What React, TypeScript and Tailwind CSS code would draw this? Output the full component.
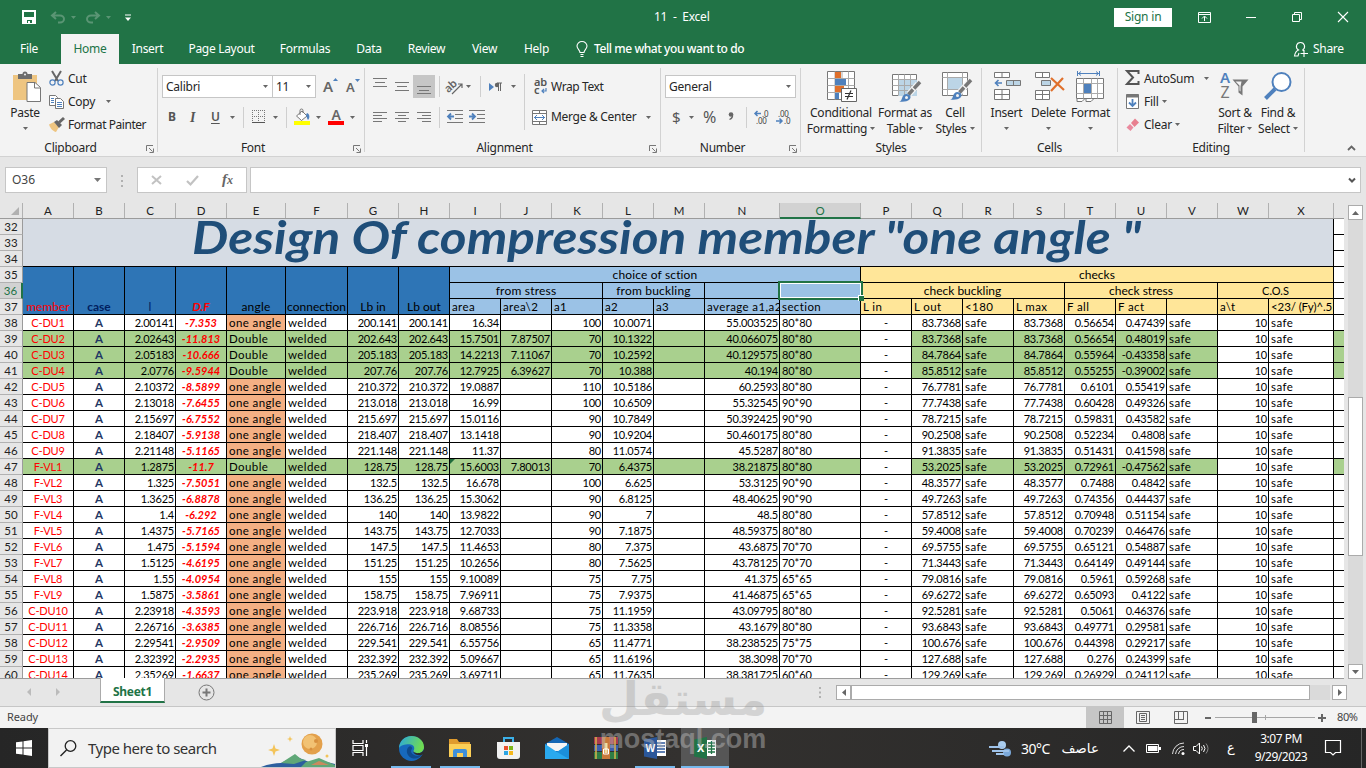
import type { ReactNode } from 'react';
import clsx from 'clsx';

const COLUMNS = 'ABCDEFGHIJKLMNOPQRSTUVWX'.split('');

const GRID_COLS =
  'grid-cols-[51px_51px_51px_51px_59px_62px_51px_51px_51px_51px_51px_51px_51px_75px_81px_51px_51px_51px_51px_51px_51px_51px_51px_65px_10px]';

// member | l | D.F | Lb | area | area\2 | a1 | a2 | average | section | L out | F all | F act
const MEMBERS = `C-DU1|2.00141|-7.353|200.141|16.34||100|10.0071|55.003525|80*80|83.7368|0.56654|0.47439
C-DU2|2.02643|-11.813|202.643|15.7501|7.87507|70|10.1322|40.066075|80*80|83.7368|0.56654|0.48019
C-DU3|2.05183|-10.666|205.183|14.2213|7.11067|70|10.2592|40.129575|80*80|84.7864|0.55964|-0.43358
C-DU4|2.0776|-9.5944|207.76|12.7925|6.39627|70|10.388|40.194|80*80|85.8512|0.55255|-0.39002
C-DU5|2.10372|-8.5899|210.372|19.0887||110|10.5186|60.2593|80*80|76.7781|0.6101|0.55419
C-DU6|2.13018|-7.6455|213.018|16.99||100|10.6509|55.32545|90*90|77.7438|0.60428|0.49326
C-DU7|2.15697|-6.7552|215.697|15.0116||90|10.7849|50.392425|90*90|78.7215|0.59831|0.43582
C-DU8|2.18407|-5.9138|218.407|13.1418||90|10.9204|50.460175|80*80|90.2508|0.52234|0.4808
C-DU9|2.21148|-5.1165|221.148|11.37||80|11.0574|45.5287|80*80|91.3835|0.51431|0.41598
F-VL1|1.2875|-11.7|128.75|15.6003|7.80013|70|6.4375|38.21875|80*80|53.2025|0.72961|-0.47562
F-VL2|1.325|-7.5051|132.5|16.678||100|6.625|53.3125|90*90|48.3577|0.7488|0.4842
F-VL3|1.3625|-6.8878|136.25|15.3062||90|6.8125|48.40625|90*90|49.7263|0.74356|0.44437
F-VL4|1.4|-6.292|140|13.9822||90|7|48.5|80*80|57.8512|0.70948|0.51154
F-VL5|1.4375|-5.7165|143.75|12.7033||90|7.1875|48.59375|80*80|59.4008|0.70239|0.46476
F-VL6|1.475|-5.1594|147.5|11.4653||80|7.375|43.6875|70*70|69.5755|0.65121|0.54887
F-VL7|1.5125|-4.6195|151.25|10.2656||80|7.5625|43.78125|70*70|71.3443|0.64149|0.49144
F-VL8|1.55|-4.0954|155|9.10089||75|7.75|41.375|65*65|79.0816|0.5961|0.59268
F-VL9|1.5875|-3.5861|158.75|7.96911||75|7.9375|41.46875|65*65|69.6272|0.65093|0.4122
C-DU10|2.23918|-4.3593|223.918|9.68733||75|11.1959|43.09795|80*80|92.5281|0.5061|0.46376
C-DU11|2.26716|-3.6385|226.716|8.08556||75|11.3358|43.1679|80*80|93.6843|0.49771|0.29581
C-DU12|2.29541|-2.9509|229.541|6.55756||65|11.4771|38.238525|75*75|100.676|0.44398|0.29217
C-DU13|2.32392|-2.2935|232.392|5.09667||65|11.6196|38.3098|70*70|127.688|0.276|0.24399
C-DU14|2.35269|-1.6637|235.269|3.69711||65|11.7635|38.381725|60*60|129.269|0.26929|0.24112`
  .split('\n')
  .map((line) => line.split('|'));

interface IcoProps {
  w: number;
  h: number;
  className?: string;
  children: ReactNode;
}

function Ico({ w, h, className, children }: IcoProps) {
  return (
    <svg width={w} height={h} viewBox={`0 0 ${w} ${h}`} fill="none" className={clsx('shrink-0 overflow-visible', className)}>
      {children}
    </svg>
  );
}

function Arrow({ className = '' }: { className?: string }) {
  return (
    <Ico w={5} h={3} className={className}>
      <path d="M0 0h5L2.5 3z" fill="#666" />
    </Ico>
  );
}

function Sep({ className = '' }: { className?: string }) {
  return <div className={clsx('w-px shrink-0 bg-[#cfcfcf]', className)} />;
}

function TitleBar() {
  return (
    <div className="flex h-[34px] items-center text-white">
      <Ico w={14} h={14} className="ml-[22px]">
        <path d="M1 1h12v12H1z" stroke="#fff" strokeWidth="2" />
        <path d="M2 7h10v6H2z" fill="#fff" />
        <path d="M5 10h5v3H5z" fill="#217346" />
        <path d="M6 11h2v2H6z" fill="#fff" />
      </Ico>
      <Ico w={14} h={12} className="ml-[15px]">
        <path d="M5 1L1 4.500L5 8M1.500 4.500H9a4 3.500 0 0 1 0 7H7" stroke="#5a9574" strokeWidth="2" />
      </Ico>
      <Ico w={5} h={3} className="ml-[6px]">
        <path d="M0 0h5L2.500 3z" fill="#5a9574" />
      </Ico>
      <Ico w={14} h={12} className="ml-[10px]">
        <path d="M9 1l4 3.500L9 8M12.500 4.500H5a4 3.500 0 0 0 0 7h2" stroke="#5a9574" strokeWidth="2" />
      </Ico>
      <Ico w={5} h={3} className="ml-[6px]">
        <path d="M0 0h5L2.500 3z" fill="#5a9574" />
      </Ico>
      <Ico w={6} h={7} className="ml-[14px]">
        <path d="M0 1h6" stroke="#fff" />
        <path d="M0 3.500h6L3 7z" fill="#fff" />
      </Ico>
      <div className="ml-[523px] w-[60px] whitespace-pre text-[12px] tracking-[-0.25px]">11  -  Excel</div>
      <div className="ml-[400px] flex h-[19px] w-[58px] items-center justify-center bg-white text-[12px] tracking-[-0.2px] text-[#217346]">
        Sign in
      </div>
      <Ico w={13} h={11} className="ml-[26px]">
        <path d="M.5.5h12v10H.5zM.5 2.500h12M6.500 9V4.500M4 6.500L6.500 4L9 6.500" stroke="#fff" />
      </Ico>
      <Ico w={10} h={11} className="ml-[35px]">
        <path d="M0 5.500h10" stroke="#fff" />
      </Ico>
      <Ico w={10} h={10} className="ml-[36px]">
        <path d="M.5 2.500h7v7h-7zM2.500 2.500v-2h7v7h-2" stroke="#fff" />
      </Ico>
      <Ico w={10} h={10} className="ml-[36px]">
        <path d="M0 0l10 10M10 0L0 10" stroke="#fff" strokeWidth="1.1" />
      </Ico>
    </div>
  );
}

const TABS = [
  { name: 'File', width: 'w-[58px]' },
  { name: 'Home', width: 'w-[58px] ml-[3px]' },
  { name: 'Insert', width: 'w-[57px]' },
  { name: 'Page Layout', width: 'w-[91px]' },
  { name: 'Formulas', width: 'w-[76px]' },
  { name: 'Data', width: 'w-[52px]' },
  { name: 'Review', width: 'w-[63px]' },
  { name: 'View', width: 'w-[53px]' },
  { name: 'Help', width: 'w-[51px]' },
];

function TabStrip() {
  return (
    <div className="flex h-[30px] items-center text-[12px] tracking-[-0.3px] text-white">
      {TABS.map((tab) => (
        <div
          key={tab.name}
          className={clsx(
            'flex h-full shrink-0 items-center justify-center whitespace-nowrap',
            tab.width,
            tab.name === 'Home' && 'bg-[#f3f3f3] text-[#217346]',
          )}
        >
          {tab.name}
        </div>
      ))}
      <Ico w={12} h={16} className="ml-[14px]">
        <path d="M4 11.500C4 9 1 8 1 5a5 4.500 0 0 1 10 0c0 3-3 4-3 6.500zM4.500 13.500h3M4.500 15.500h3" stroke="#fff" strokeWidth="1.1" />
      </Ico>
      <div className="ml-[6px] w-[170px] whitespace-nowrap font-medium tracking-[-0.42px]">Tell me what you want to do</div>
      <Ico w={14} h={15} className="ml-[530px]">
        <path d="M6.500.5a4 4 0 0 1 2 7.500M6.500.5a4 4 0 0 0-2 7.500c-2.500 1-3.500 3-4 6h3.500l1-3M8.500 8l1.500 1M10 8v7M6.500 11.500H14" stroke="#fff" strokeWidth="1.1" />
      </Ico>
      <div className="ml-[5px]">Share</div>
    </div>
  );
}

interface GroupProps {
  label: string;
  className: string;
  launcher?: boolean;
  labelShift?: string;
  children: ReactNode;
}

function Group({ label, className, launcher, labelShift, children }: GroupProps) {
  return (
    <div className={clsx('mt-1 flex h-[84px] shrink-0 flex-col border-r border-[#d2d2d2]', className)}>
      <div className="flex h-[70px] shrink-0">{children}</div>
      <div className="relative flex h-[14px] shrink-0 items-center justify-center pt-[6px] text-[#262626]">
        <span className={labelShift}>{label}</span>
        {launcher && (
          <Ico w={8} h={8} className="absolute right-[3px] top-[7px]">
            <path d="M.5 6V.5H7M3 3l3.500 3.500M7.500 3.500v4h-4" stroke="#777" />
          </Ico>
        )}
      </div>
    </div>
  );
}

function ClipboardGroup() {
  return (
    <Group label="Clipboard" launcher labelShift="-ml-4" className="w-[158px]">
      <div className="ml-[5px] flex w-[40px] flex-col items-center">
        <Ico w={29} h={31} className="ml-[3px] mt-[3px]">
          <path d="M1 4h24v25H1z" fill="#eec581" />
          <path d="M6 3h4.500a2.500 2.500 0 0 1 5 0H20v5H6z" fill="#6d6d6d" />
          <circle cx="13" cy="3.500" r="1" fill="#f3f3f3" />
          <path d="M15 11.500h8l5.500 5V30.500H15z" fill="#fff" stroke="#777" />
          <path d="M22.500 12v5h5.500" stroke="#777" />
        </Ico>
        <div className="mt-[2px]">Paste</div>
        <Arrow className="mt-[5px]" />
      </div>
      <div className="-mt-px ml-[4px] flex flex-col">
        <div className="flex h-[23px] items-center">
          <Ico w={15} h={15}>
            <path d="M3 0l6 10M12 0L6 10" stroke="#666" strokeWidth="2" />
            <circle cx="3.500" cy="11.500" r="2.600" stroke="#4f81bd" strokeWidth="1.200" />
            <circle cx="11.500" cy="11.500" r="2.600" stroke="#4f81bd" strokeWidth="1.200" />
          </Ico>
          <span className="ml-[4px]">Cut</span>
        </div>
        <div className="flex h-[23px] items-center">
          <Ico w={15} h={14}>
            <path d="M.5.5h6l2 2v8h-8z" fill="#fff" stroke="#777" />
            <path d="M2 3.500h3M2 5.500h3M2 7.500h3" stroke="#4f81bd" />
            <path d="M6.500 3.500h5l3 3v7h-8z" fill="#fff" stroke="#777" />
            <path d="M8 7.500h5M8 9.500h5M8 11.500h5" stroke="#4f81bd" />
          </Ico>
          <span className="ml-[4px]">Copy</span>
          <Arrow className="ml-[11px]" />
        </div>
        <div className="flex h-[23px] items-center">
          <Ico w={16} h={14}>
            <path d="M0 6.500l5-2.500 5 5-3 5C4 13.500 1 10 0 6.500z" fill="#eec581" />
            <path d="M5 4l3-2 5 5-3 3z" fill="#666" />
            <path d="M10 4.500L15 0" stroke="#666" strokeWidth="3" />
          </Ico>
          <span className="ml-[3px] whitespace-nowrap tracking-[-0.45px]">Format Painter</span>
        </div>
      </div>
    </Group>
  );
}

function Combo({ value, className }: { value: string; className: string }) {
  return (
    <div className={clsx('flex h-[23px] shrink-0 items-center justify-between border border-[#c6c6c6] bg-white pl-[3px] pr-[4px]', className)}>
      <span>{value}</span>
      <Arrow />
    </div>
  );
}

function FontGroup() {
  return (
    <Group label="Font" launcher labelShift="-ml-4" className="w-[207px]">
      <div className="flex flex-col">
        <div className="mt-[7px] flex h-[23px] items-center">
          <Combo value="Calibri" className="ml-[4px] w-[111px]" />
          <Combo value="11" className="-ml-px w-[44px]" />
          <div className="ml-[7px] flex w-[16px] text-[15px] font-semibold leading-none text-[#666]">
            A
            <Ico w={5} h={3} className="-mt-px">
              <path d="M0 3h5L2.500 0z" fill="#4f81bd" />
            </Ico>
          </div>
          <div className="ml-[7px] flex w-[16px] text-[13px] font-semibold leading-none text-[#666]">
            <span className="mt-[1px]">A</span>
            <Ico w={5} h={3} className="-mt-px">
              <path d="M0 0h5L2.500 3z" fill="#4f81bd" />
            </Ico>
          </div>
        </div>
        <div className="mt-[7px] flex h-6 items-center text-[13px] text-[#555]">
          <span className="ml-[10px] w-[22px] text-[12px] font-bold">B</span>
          <span className="w-[21px] text-[14px] font-bold italic [font-family:'Liberation_Serif']">I</span>
          <span className="w-[19px] text-[12px] font-semibold underline underline-offset-2">U</span>
          <Arrow />
          <Sep className="ml-[8px] h-[21px]" />
          <Ico w={14} h={14} className="ml-[8px]">
            <path d="M.5 0v12M6.500 0v12M12.500 0v12M0 .5h13M0 6.500h13" stroke="#777" strokeDasharray="1 1" />
            <path d="M0 12.500h13" stroke="#555" />
          </Ico>
          <Arrow className="ml-[7px]" />
          <Sep className="ml-[8px] h-[21px]" />
          <Ico w={16} h={16} className="ml-[7px]">
            <path d="M2.500 7L8 2l5 5-5.500 4.500z" fill="#fff" stroke="#777" />
            <path d="M6 6V1.500a1.500 1.500 0 0 1 3 0V4" stroke="#777" />
            <path d="M13 4c3 1 3 5 1 7-1-1-1-3-2-5z" fill="#4f81bd" />
            <path d="M0 12h16v4H0z" fill="#ff0" />
          </Ico>
          <Arrow className="ml-[6px]" />
          <div className="ml-[7px] flex h-[16px] w-[16px] flex-col items-center border-b-4 border-[#f00] text-[14px] font-semibold leading-[11px] text-[#666]">
            A
          </div>
          <Arrow className="ml-[6px]" />
        </div>
      </div>
    </Group>
  );
}

function LinesIcon({ d, className }: { d: string; className?: string }) {
  return (
    <Ico w={14} h={14} className={className}>
      <path d={d} stroke="#777" />
    </Ico>
  );
}

function AlignmentGroup() {
  return (
    <Group label="Alignment" launcher labelShift="-ml-4" className="w-[296px]">
      <div className="flex w-[159px] flex-col">
        <div className="mt-[7px] flex h-[23px] items-center">
          <LinesIcon className="-mt-[3px] ml-[8px]" d="M0 0.500h14M2 4.500h10M0 8.500h14" />
          <LinesIcon className="ml-[8px]" d="M0 2.500h14M2 6.500h10M0 10.500h14" />
          <div className="ml-[4px] flex h-[23px] w-[22px] items-center justify-center bg-[#c6c6c6]">
            <LinesIcon d="M0 6.500h14M2 10.500h10M0 13.500h14" />
          </div>
          <Sep className="ml-[4px] h-[21px]" />
          <Ico w={18} h={16} className="ml-[6px]">
            <text x="-1" y="10" fontSize="11" fontWeight="600" fill="#666" transform="rotate(-42 6 8)">
              ab
            </text>
            <path d="M6 15L16 5M12 5h4v4" stroke="#666" strokeWidth="1.200" />
          </Ico>
          <Arrow className="ml-[2px]" />
          <Sep className="ml-[9px] h-[21px]" />
          <Ico w={14} h={10} className="ml-[8px]">
            <path d="M0 1l5 4-5 4z" fill="#4f81bd" />
            <path d="M9.500 9V1M11.500 9V1M8 1h5" stroke="#666" />
            <circle cx="8" cy="3" r="2.200" fill="#666" />
          </Ico>
          <Arrow className="ml-[8px]" />
        </div>
        <div className="mt-[7px] flex h-6 items-center">
          <LinesIcon className="ml-[8px]" d="M0 2.500h14M0 5.500h9M0 8.500h14M0 11.500h9" />
          <LinesIcon className="ml-[8px]" d="M0 2.500h14M3 5.500h8M0 8.500h14M3 11.500h8" />
          <LinesIcon className="ml-[8px]" d="M0 2.500h14M5 5.500h9M0 8.500h14M5 11.500h9" />
          <Sep className="ml-[8px] h-[21px]" />
          <Ico w={16} h={14} className="ml-[7px]">
            <path d="M0 .5h16M8 4.500h8M8 8.500h8M0 12.500h16" stroke="#777" />
            <path d="M7 6.500H1M4 3.500L1 6.500l3 3" stroke="#4f81bd" strokeWidth="1.800" />
          </Ico>
          <Ico w={16} h={14} className="ml-[6px]">
            <path d="M0 .5h16M8 4.500h8M8 8.500h8M0 12.500h16" stroke="#777" />
            <path d="M0 6.500h6M3 3.500l3 3-3 3" stroke="#4f81bd" strokeWidth="1.800" />
          </Ico>
        </div>
      </div>
      <Sep className="mt-[6px] h-[56px]" />
      <div className="flex flex-col">
        <div className="mt-[7px] flex h-[23px] items-center">
          <Ico w={14} h={16} className="ml-[9px]">
            <text x="0" y="7" fontSize="11" fontWeight="600" fill="#555">
              ab
            </text>
            <text x="0" y="15" fontSize="11" fontWeight="600" fill="#555">
              c
            </text>
            <path d="M12 9v3H8M10 10l-2 2 2 2" stroke="#4f81bd" strokeWidth="1.200" />
          </Ico>
          <span className="ml-[3px] tracking-[-0.4px]">Wrap Text</span>
        </div>
        <div className="mt-[7px] flex h-6 items-center">
          <Ico w={15} h={15} className="ml-[7px]">
            <path d="M.5.5h14v14H.5zM.5 3.500h14M.5 11.500h14M7.500 0v3M7.500 12v3" fill="#fff" stroke="#777" />
            <path d="M2 7.500h11M5 5L2.500 7.500L5 10M10 5l2.500 2.500L10 10" stroke="#4f81bd" />
          </Ico>
          <span className="ml-[4px] w-[92px] whitespace-nowrap tracking-[-0.3px]">Merge &amp; Center</span>
          <Arrow className="ml-[3px]" />
        </div>
      </div>
    </Group>
  );
}

function NumberGroup() {
  return (
    <Group label="Number" launcher labelShift="-ml-4" className="w-[140px]">
      <div className="flex flex-col">
        <div className="mt-[7px] flex h-[23px] items-center">
          <Combo value="General" className="ml-[4px] w-[131px]" />
        </div>
        <div className="mt-[7px] flex h-6 items-center text-[15px] text-[#555]">
          <span className="ml-[11px] w-[17px]">$</span>
          <Arrow />
          <span className="ml-[9px] w-[24px] text-[16px]">%</span>
          <Ico w={6} h={8} className="-mt-[2px] ml-[1px]">
            <circle cx="3" cy="2.500" r="2.300" fill="#666" />
            <path d="M4.500 2.500Q5 6 1.500 7.500" stroke="#666" strokeWidth="1.300" />
          </Ico>
          <Sep className="ml-[12px] h-[21px]" />
          <Ico w={15} h={15} className="ml-[7px]">
            <text x="8" y="6.500" fontSize="8" fill="#444">.0</text>
            <text x="2" y="14" fontSize="8" fill="#444">.00</text>
            <path d="M7 3.500H1M3.500 1L1 3.500L3.500 6" stroke="#4f81bd" strokeWidth="1.500" />
          </Ico>
          <Ico w={15} h={15} className="ml-[7px]">
            <text x="2" y="6.500" fontSize="8" fill="#444">.00</text>
            <text x="8" y="14" fontSize="8" fill="#444">.0</text>
            <path d="M0 11h6M3.500 8.500L6 11l-2.500 2.500" stroke="#4f81bd" strokeWidth="1.500" />
          </Ico>
        </div>
      </div>
    </Group>
  );
}

interface BigButtonProps {
  icon: ReactNode;
  line1: string;
  line2?: string;
  className: string;
}

function BigButton({ icon, line1, line2, className }: BigButtonProps) {
  return (
    <div className={clsx('flex shrink-0 flex-col items-center whitespace-nowrap', className)}>
      <div className="flex h-[37px] items-center">{icon}</div>
      <div className="h-[16px] leading-[16px]">{line1}</div>
      <div className="flex h-[16px] items-center leading-[16px]">
        {line2 && <span className="mr-[3px]">{line2}</span>}
        <Arrow className="-mt-px" />
      </div>
    </div>
  );
}

function Brush({ x, y }: { x: number; y: number }) {
  return (
    <g transform={`translate(${x} ${y})`}>
      <path d="M9 11L18 1" stroke="#f3f3f3" strokeWidth="6" />
      <path d="M8.500 11.500L13 6.500" stroke="#777" strokeWidth="3.500" />
      <path d="M14 5.500L20 -1" stroke="#777" strokeWidth="3.500" />
      <path d="M-1 18.500c4 0 2-7 7-7.500 4 0 6 3 3.500 5.500-2 2-6 2.500-10.500 2z" fill="#4f81bd" />
      <circle cx="6.500" cy="14.500" r="1.500" fill="#f3f3f3" />
    </g>
  );
}

function StylesGroup() {
  return (
    <Group label="Styles" className="w-[181px]">
      <BigButton
        className="ml-[4px] w-[72px]"
        line1="Conditional"
        line2="Formatting"
        icon={
          <Ico w={30} h={31} className="ml-[2px]">
            <path d="M.5.5h27v28H.5z" fill="#fff" stroke="#777" />
            <path d="M.5 7.500h27M.5 14.500h27M.5 21.500h27M8 .5v28M15 .5v28M21.500 .5v28" stroke="#aaa" />
            <path d="M8 1h6v6H8zM8 15h9v6H8z" fill="#e0702c" />
            <path d="M8 8h11v6H8zM8 22h4v6H8z" fill="#4f81bd" />
            <path d="M14.500 17.500h15v13h-15z" fill="#fff" stroke="#666" />
            <path d="M18 22.500h8M18 25.500h8M24 19.500l-4 9" stroke="#333" strokeWidth="1.200" />
          </Ico>
        }
      />
      <BigButton
        className="ml-[1px] w-[54px]"
        line1="Format as"
        line2="Table"
        icon={
          <Ico w={30} h={31} className="ml-[3px]">
            <path d="M.5 3.500h24v21H.5z" fill="#fff" stroke="#777" />
            <path d="M6 9h19v16H6z" fill="#bcd5e6" />
            <path d="M.5 8.500h24M.5 14.500h24M.5 19.500h24M6.500 3.500v21M12.500 3.500v21M18.500 3.500v21" stroke="#aaa" />
            <Brush x={8} y={12} />
          </Ico>
        }
      />
      <BigButton
        className="w-[46px]"
        line1="Cell"
        line2="Styles"
        icon={
          <Ico w={30} h={31} className="ml-[3px]">
            <path d="M.5 1.500h25v23H.5z" fill="#fff" stroke="#777" />
            <path d="M.5 6.500h25M.5 18.500h25M5.500 1.500v23M20.500 1.500v23" stroke="#aaa" />
            <path d="M6 7h14v11H6z" fill="#bcd5e6" />
            <Brush x={9} y={10} />
          </Ico>
        }
      />
    </Group>
  );
}

function CellsGroup() {
  return (
    <Group label="Cells" className="w-[136px]">
      <BigButton
        className="ml-[4px] w-[41px]"
        line1="Insert"
        icon={
          <Ico w={27} h={30} className="ml-[2px]">
            <path d="M.5.5h15v5H.5zM8 .5v5M.5 17.500h15v10H.5zM.5 22.500h15M8 17.500v10" fill="#fff" stroke="#777" />
            <path d="M12.500 8.500h14v5h-14zM19.500 8.500v5" fill="#bcd5e6" stroke="#777" />
            <path d="M8 11H2M4.500 8L1.500 11l3 3" stroke="#4f81bd" strokeWidth="1.600" />
          </Ico>
        }
      />
      <BigButton
        className="ml-[1px] w-[41px]"
        line1="Delete"
        icon={
          <Ico w={30} h={30} className="ml-[2px]">
            <path d="M.5.5h14v5H.5zM7.500 .5v5M.5 18.500h14v9H.5zM.5 22.500h14M7.500 18.500v9" fill="#fff" stroke="#777" />
            <path d="M6.500 8.500h9v5h-9z" fill="#bcd5e6" stroke="#777" />
            <path d="M16 6l13 12M28 6L16 19" stroke="#e0702c" strokeWidth="2.200" />
          </Ico>
        }
      />
      <BigButton
        className="w-[43px]"
        line1="Format"
        icon={
          <Ico w={29} h={31}>
            <path d="M.5 7.500h27v20H.5z" fill="#fff" stroke="#777" />
            <path d="M.5 12.500h27M.5 22.500h27M7.500 7.500v20M15.500 7.500v20M21.500 7.500v20" stroke="#aaa" />
            <path d="M8 13h7v9H8z" fill="#4f81bd" />
            <path d="M1.500 0v5M23.500 0v5M2 2.500h21M5 .5L2.500 2.500L5 4.500M20 .5l2.500 2L20 4.500" stroke="#4f81bd" />
            <path d="M1 28v2.500h5L8.500 28M10 28v2.500h5l2.500-2.500" fill="#fff" stroke="#777" />
          </Ico>
        }
      />
    </Group>
  );
}

function EditingGroup() {
  return (
    <Group label="Editing" className="w-[187px]">
      <div className="-mt-px ml-[7px] flex w-[89px] shrink-0 flex-col">
        <div className="flex h-[23px] items-center">
          <Ico w={15} h={15} className="-mt-[3px]">
            <path d="M13.500 4V1H2l6 6.500L2 14h11.500v-3" stroke="#555" strokeWidth="2" />
          </Ico>
          <span className="ml-[4px] w-[54px]">AutoSum</span>
          <Arrow className="ml-[6px]" />
        </div>
        <div className="flex h-[23px] items-center">
          <Ico w={15} h={15}>
            <path d="M1.500.5h12v14h-12z" fill="#fff" stroke="#777" />
            <path d="M1.500.5h12v3h-12z" fill="#777" />
            <path d="M7.500 5v7M4 8.500L7.500 12L11 8.500" stroke="#4f81bd" strokeWidth="1.800" />
          </Ico>
          <span className="ml-[4px]">Fill</span>
          <Arrow className="ml-[3px]" />
        </div>
        <div className="flex h-[23px] items-center">
          <Ico w={15} h={14}>
            <path d="M6 5l4-4.500 4 4L9.500 9z" fill="#e87f8f" />
            <path d="M5 6l3.500 3.500-3 3.500-4-3.500z" fill="#ea8a9e" />
          </Ico>
          <span className="ml-[4px]">Clear</span>
          <Arrow className="ml-[3px]" />
        </div>
      </div>
      <BigButton
        className="w-[42px]"
        line1="Sort &"
        line2="Filter"
        icon={
          <Ico w={30} h={28} className="-mt-[2px]">
            <text x="0" y="11" fontSize="15" fontWeight="600" fill="#4f81bd">A</text>
            <text x="0.500" y="26" fontSize="16" fill="#777">Z</text>
            <path d="M12.500 7.500h16l-6 7v9l-4-3v-6z" fill="#777" />
            <path d="M15.500 9.500h6l-1 5v5l-1-1v-5z" fill="#f3f3f3" />
          </Ico>
        }
      />
      <BigButton
        className="ml-[2px] w-[40px]"
        line1="Find &"
        line2="Select"
        icon={
          <Ico w={28} h={28} className="-mt-[2px]">
            <circle cx="17.500" cy="10" r="9" fill="#fff" stroke="#4f81bd" strokeWidth="2" />
            <path d="M11 17L1.500 26.500" stroke="#4f81bd" strokeWidth="4" />
          </Ico>
        }
      />
    </Group>
  );
}

function Ribbon() {
  return (
    <div className="flex h-[93px] border-b border-[#d2d2d2] bg-[#f3f3f3] text-[12px] tracking-[-0.25px] text-[#262626]">
      <ClipboardGroup />
      <FontGroup />
      <AlignmentGroup />
      <NumberGroup />
      <StylesGroup />
      <CellsGroup />
      <EditingGroup />
      <Ico w={9} h={6} className="ml-[42px] mt-[81px]">
        <path d="M1 5l3.500-3.500L8 5" stroke="#666" strokeWidth="1.800" />
      </Ico>
    </div>
  );
}

function FormulaBar() {
  return (
    <div className="flex h-[46px] items-start bg-[#e6e6e6] pt-[10px] text-[12px] text-[#444]">
      <div className="ml-[5px] flex h-[26px] w-[102px] items-center justify-between border border-[#c6c6c6] bg-white pl-[6px] pr-[5px]">
        O36
        <Ico w={7} h={4}>
          <path d="M0 0h7L3.500 4z" fill="#777" />
        </Ico>
      </div>
      <Ico w={2} h={12} className="ml-[14px] mt-[8px]">
        <path d="M0 0h2v2H0zM0 5h2v2H0zM0 10h2v2H0z" fill="#b1b1b1" />
      </Ico>
      <div className="ml-[14px] flex h-[26px] w-[110px] items-center border border-[#c6c6c6] bg-white">
        <Ico w={11} h={10} className="ml-[13px]">
          <path d="M1 1l9 8M10 1L1 9" stroke="#c2c2c2" strokeWidth="2" />
        </Ico>
        <Ico w={13} h={11} className="ml-[24px]">
          <path d="M1 6l3.500 3.500L12 1" stroke="#c2c2c2" strokeWidth="2.200" />
        </Ico>
        <div className="-mt-[2px] ml-[23px] text-[15px] font-bold italic leading-none text-[#666] [font-family:'Liberation_Serif']">
          f<span className="text-[12px]">x</span>
        </div>
      </div>
      <div className="ml-[3px] flex h-[26px] w-[1111px] items-center justify-end border border-[#c6c6c6] bg-white pr-[4px]">
        <Ico w={8} h={5}>
          <path d="M1 .5l3 3 3-3" stroke="#555" strokeWidth="2" />
        </Ico>
      </div>
    </div>
  );
}

interface CellProps {
  align?: 'left' | 'center' | 'right';
  className?: string;
  children?: ReactNode;
}

function Cell({ align = 'left', className, children }: CellProps) {
  return (
    <div
      className={clsx(
        'flex overflow-hidden whitespace-nowrap border-b border-r border-black leading-[15px]',
        align === 'left' && 'justify-start pl-[2px] text-[11.5px] tracking-[0.4px]',
        align === 'center' && 'justify-center',
        align === 'right' && 'justify-end pr-[1px] text-[11px] tracking-[-0.22px]',
        className,
      )}
    >
      {children}
    </div>
  );
}

function MemberRow({ row }: { row: string[] }) {
  const [member, l, df, lb, area, half, a1, a2, avg, section, lOut, fAll, fAct] = row;
  const isDouble = half !== '';
  const green = isDouble ? 'bg-[#a9d08e]' : 'bg-white';
  return (
    <>
      <Cell align="center" className={clsx(green, 'text-[11px] tracking-[-0.2px] text-[#f00]')}>{member}</Cell>
      <Cell align="center" className={clsx(green, 'text-[11.5px] font-bold text-[#1f3864]')}>A</Cell>
      <Cell align="right" className={green}>{l}</Cell>
      <Cell align="center" className={clsx(green, 'text-[11px] font-bold italic text-[#f00]')}>{df}</Cell>
      <Cell className={isDouble ? green : 'bg-[#f4b084]'}>{isDouble ? 'Double' : 'one angle'}</Cell>
      <Cell className={green}>welded</Cell>
      <Cell align="right" className={green}>{lb}</Cell>
      <Cell align="right" className={green}>{lb}</Cell>
      <Cell align="right" className={clsx(green, 'relative')}>
        {member === 'F-VL1' && (
          <Ico w={5} h={5} className="absolute left-0 top-0">
            <path d="M0 0h5L0 5z" fill="#1e6b3a" />
          </Ico>
        )}
        {area}
      </Cell>
      <Cell align="right" className={green}>{half}</Cell>
      <Cell align="right" className={green}>{a1}</Cell>
      <Cell align="right" className={green}>{a2}</Cell>
      <Cell className={green} />
      <Cell align="right" className={green}>{avg}</Cell>
      <Cell className={green}>
        <span className="text-[11px] tracking-[-0.1px]">{section}</span>
      </Cell>
      <Cell align="center" className="bg-white text-[11px]">-</Cell>
      <Cell align="right" className={green}>{lOut}</Cell>
      <Cell className={green}>safe</Cell>
      <Cell align="right" className={green}>{lOut}</Cell>
      <Cell align="right" className={green}>{fAll}</Cell>
      <Cell align="right" className={green}>{fAct}</Cell>
      <Cell className={green}>safe</Cell>
      <Cell align="right" className="bg-white">10</Cell>
      <Cell className="bg-white">safe</Cell>
      <div className={clsx('border-b border-black', green)} />
    </>
  );
}

const HEAD = 'bg-[#2e75b6] row-span-3 items-end';
const LIGHT = 'bg-[#9bc2e6]';
const YELLOW = 'bg-[#ffe699]';
const BLANK = 'border-b border-black bg-white';

function TableHead() {
  return (
    <>
      <div className="col-span-24 row-span-3 flex justify-center overflow-hidden whitespace-pre border-b border-r border-black bg-[#d6dce4] pr-[22px] text-[46px] font-bold italic leading-[36px] text-[#1f4e79]">
        <span className="scale-x-[1.115]">Design Of compression member "one angle "</span>
      </div>
      <div className={BLANK} />
      <div className={BLANK} />
      <div className={BLANK} />

      <Cell align="center" className={clsx(HEAD, 'text-[12px] text-[#f00]')}>member</Cell>
      <Cell align="center" className={clsx(HEAD, 'text-[12px] font-bold text-[#002060]')}>case</Cell>
      <Cell align="center" className={clsx(HEAD, 'text-[12px] text-[#002060]')}>l</Cell>
      <Cell align="center" className={clsx(HEAD, 'text-[12px] font-bold italic text-[#f00]')}>D.F</Cell>
      <Cell align="center" className={clsx(HEAD, 'text-[12px] tracking-[0.2px]')}>angle</Cell>
      <Cell align="center" className={clsx(HEAD, 'text-[12px]')}>connection</Cell>
      <Cell align="center" className={clsx(HEAD, 'text-[12px]')}>Lb in</Cell>
      <Cell align="center" className={clsx(HEAD, 'text-[12px]')}>Lb out</Cell>
      <Cell align="center" className={clsx(LIGHT, 'col-span-7 text-[12px] tracking-[0.15px]')}>choice of sction</Cell>
      <Cell align="center" className={clsx(YELLOW, 'col-span-9 text-[12px]')}>checks</Cell>
      <div className={BLANK} />

      <Cell align="center" className={clsx(LIGHT, 'col-span-3 text-[12px] tracking-[0.2px]')}>from stress</Cell>
      <Cell align="center" className={clsx(LIGHT, 'col-span-2 text-[12px] tracking-[0.2px]')}>from buckling</Cell>
      <Cell className={LIGHT} />
      <div className={clsx('relative', LIGHT)}>
        <div className="absolute -left-[2px] -top-[2px] z-10 h-[19px] w-[85px] border-2 border-[#217346]">
          <div className="h-full border border-white" />
          <div className="absolute -bottom-[3px] -right-[3px] h-[6px] w-[6px] border-l border-t border-white bg-[#217346]" />
        </div>
      </div>
      <Cell align="center" className={clsx(YELLOW, 'col-span-4 text-[12px]')}>check buckling</Cell>
      <Cell align="center" className={clsx(YELLOW, 'col-span-3 text-[12px]')}>check stress</Cell>
      <Cell align="center" className={clsx(YELLOW, 'col-span-2 text-[11px]')}>C.O.S</Cell>
      <div className={BLANK} />

      {['area', 'area\\2', 'a1', 'a2', 'a3', 'average a1,a2', 'section'].map((text) => (
        <Cell key={text} className={LIGHT}>{text}</Cell>
      ))}
      {['L in', 'L out', '<180', 'L max', 'F all', 'F act', '', 'a\\t'].map((text) => (
        <Cell key={text} className={YELLOW}>{text}</Cell>
      ))}
      <Cell className={YELLOW}>
        <span className="tracking-[-0.1px]">&lt;23/ (Fy)^.5</span>
      </Cell>
      <div className={BLANK} />
    </>
  );
}

function Sheet() {
  return (
    <div className="flex h-[476px] bg-[#e6e6e6]">
      <div className="h-[476px] w-[1344px] shrink-0 overflow-hidden border-b border-[#9b9b9b] text-black [font-family:Lato,sans-serif]">
        <div className="flex h-[16px] border-b border-[#9b9b9b] text-[11.5px]">
          <div className="flex w-[23px] shrink-0 items-end justify-end border-r border-[#b1b1b1] pb-[3px] pr-[3px]">
            <Ico w={8} h={8}>
              <path d="M8 0v8H0z" fill="#b1b1b1" />
            </Ico>
          </div>
          <div className={clsx('grid', GRID_COLS)}>
            {COLUMNS.map((col) => (
              <div
                key={col}
                className={clsx(
                  'flex items-center justify-center border-r border-[#b1b1b1] leading-[13px]',
                  col === 'O' ? 'h-[16px] border-b-2 border-b-[#217346] bg-[#d2d2d2] text-[#217346]' : 'h-[15px] text-[#222]',
                )}
              >
                {col}
              </div>
            ))}
          </div>
        </div>
        <div className="flex">
          <div className="flex w-[23px] shrink-0 flex-col text-[11.5px] text-[#222]">
            {Array.from({ length: 29 }, (_, i) => i + 32).map((n) => (
              <div
                key={n}
                className={clsx(
                  'flex h-[16px] shrink-0 items-center justify-center border-b border-b-[#b1b1b1] leading-[15px]',
                  n === 36 ? 'border-r-2 border-r-[#217346] bg-[#d2d2d2] text-[#217346]' : 'border-r border-r-[#9b9b9b]',
                )}
              >
                {n}
              </div>
            ))}
          </div>
          <div className={clsx('grid auto-rows-[16px]', GRID_COLS)}>
            <TableHead />
            {MEMBERS.map((row) => (
              <MemberRow key={row[0]} row={row} />
            ))}
          </div>
        </div>
      </div>
      <div className="ml-[4px] mt-[2px] flex h-[474px] w-[15px] flex-col bg-[#dadada]">
        <div className="flex h-[15px] items-center justify-center border border-[#ababab] bg-white">
          <Ico w={7} h={4}>
            <path d="M0 4h7L3.500 0z" fill="#666" />
          </Ico>
        </div>
        <div className="mt-[177px] h-[159px] border border-[#ababab] bg-white" />
        <div className="mt-auto flex h-[15px] items-center justify-center border border-[#ababab] bg-white">
          <Ico w={7} h={4}>
            <path d="M0 0h7L3.500 4z" fill="#666" />
          </Ico>
        </div>
      </div>
    </div>
  );
}

function SheetTabs() {
  return (
    <div className="flex h-[28px] items-start border-b border-[#c6c6c6] bg-[#e6e6e6]">
      <Ico w={4} h={8} className="ml-[27px] mt-[9px]">
        <path d="M4 0v8L0 4z" fill="#bbb" />
      </Ico>
      <Ico w={4} h={8} className="ml-[25px] mt-[9px]">
        <path d="M0 0v8l4-4z" fill="#bbb" />
      </Ico>
      <div className="relative z-10 -mt-px ml-[40px] flex h-[25px] w-[65px] items-center justify-center border-x border-b-2 border-x-[#ababab] border-b-[#217346] bg-white pt-[5px] text-[12px] font-bold tracking-[-0.3px] text-[#217346]">
        Sheet1
      </div>
      <Ico w={17} h={17} className="ml-[33px] mt-[5px]">
        <circle cx="8.500" cy="8.500" r="7.500" stroke="#777" />
        <path d="M8.500 4.500v8M4.500 8.500h8" stroke="#777" strokeWidth="2" />
      </Ico>
      <Ico w={2} h={11} className="ml-[604px] mt-[8px]">
        <path d="M0 0h2v2H0zM0 4.500h2v2H0zM0 9h2v2H0z" fill="#b1b1b1" />
      </Ico>
      <div className="ml-[15px] mt-[6px] flex h-[15px] w-[511px] bg-[#dadada]">
        <div className="flex w-[15px] items-center justify-center border border-[#ababab] bg-white">
          <Ico w={4} h={7}>
            <path d="M4 0v7L0 3.500z" fill="#666" />
          </Ico>
        </div>
        <div className="w-[459px] border border-[#ababab] bg-white" />
        <div className="ml-auto w-[2px] bg-[#e6e6e6]" />
        <div className="flex w-[15px] items-center justify-center border border-[#ababab] bg-white">
          <Ico w={4} h={7}>
            <path d="M0 0v7l4-3.500z" fill="#666" />
          </Ico>
        </div>
      </div>
    </div>
  );
}

function StatusBar() {
  return (
    <div className="flex h-[21px] items-center bg-[#f3f3f3] text-[11px] text-[#444]">
      <span className="ml-[7px] w-[60px] tracking-[-0.1px]">Ready</span>
      <div className="ml-auto flex h-full w-[38px] items-center justify-center bg-[#c6c6c6]">
        <Ico w={13} h={13}>
          <path d="M.5.5h12v12H.5zM4.500 0v13M8.500 0v13M0 4.500h13M0 8.500h13" stroke="#666" />
        </Ico>
      </div>
      <Ico w={14} h={13} className="ml-[12px]">
        <path d="M.5.5h13v12H.5zM3.500 2.500h7v8h-7zM5 4.500h4M5 6.500h4M5 8.500h4" stroke="#666" />
      </Ico>
      <Ico w={14} h={13} className="ml-[24px]">
        <path d="M.5.5h13v12H.5zM4.500 1v7M9.500 1v7M1 8.500h9" stroke="#666" />
      </Ico>
      <div className="ml-[17px] h-[2px] w-[6px] bg-[#666]" />
      <div className="relative ml-[4px] h-[11px] w-[100px]">
        <div className="mt-[5px] h-px bg-[#a6a6a6]" />
        <div className="absolute left-[37px] top-0 h-[11px] w-[5px] bg-[#666]" />
        <div className="absolute left-[50px] top-[3px] h-[5px] w-px bg-[#a6a6a6]" />
      </div>
      <Ico w={8} h={8} className="ml-[3px]">
        <path d="M4 0v8M0 4h8" stroke="#666" strokeWidth="2" />
      </Ico>
      <span className="ml-[11px] w-[29px] tracking-[-0.4px]">80%</span>
    </div>
  );
}

function SearchArt() {
  return (
    <Ico w={74} h={38} className="ml-auto">
      <path d="M0 38C8 35 14 34 20 34l14-7 14 6 10-2 16 4v3z" fill="#2d5f9e" />
      <path d="M20 34l14-9 6 5 5 1-12 4z" fill="#5fa777" />
      <path d="M45 33l13-4 16 7v2H40z" fill="#5fa777" />
      <path d="M50 36l8-4 10 4z" fill="#c98a5e" />
      <circle cx="51" cy="15" r="10.500" fill="#e3a04b" />
      <circle cx="49" cy="13" r="7" fill="#f2c274" />
      <circle cx="55" cy="12" r="2" fill="#d8903f" />
      <circle cx="50" cy="20" r="1.500" fill="#d8903f" />
      <path d="M13 15l1.500 4.500L19 21l-4.500 1.500L13 27l-1.500-4.500L7 21l4.500-1.500zM29 7l.8 2.200L32 10l-2.200.8L29 13l-.8-2.200L26 10l2.200-.8z" fill="#f3c45a" />
      <circle cx="66" cy="27" r="1.500" fill="#f3c45a" />
    </Ico>
  );
}

interface TaskItemProps {
  className: string;
  open?: boolean;
  children: ReactNode;
}

function TaskItem({ className, open, children }: TaskItemProps) {
  return (
    <div className={clsx('flex h-full shrink-0 flex-col items-center', className)}>
      <div className="flex h-[38px] items-center pt-[2px]">{children}</div>
      {open && <div className="h-[2px] w-full bg-[#76b9ed]" />}
    </div>
  );
}

function Taskbar() {
  return (
    <div className="flex h-[40px] items-center bg-gradient-to-r from-[#262626] via-[#33312f] to-[#262626] text-white">
      <Ico w={16} h={16} className="ml-[16px]">
        <path d="M0 2.300L6.500 1.400V7.500H0zM7.500 1.200L16 0v7.500H7.500zM0 8.500h6.500v6.100L0 13.700zM7.500 8.500H16V16l-8.500-1.200z" fill="#fff" />
      </Ico>
      <div className="ml-[16px] flex h-full w-[288px] items-center border border-[#c8c8c8] bg-[#f2f2f2]">
        <Ico w={17} h={17} className="ml-[11px]">
          <circle cx="10.500" cy="6" r="5.300" stroke="#222" strokeWidth="1.300" />
          <path d="M6.500 10L.5 16" stroke="#222" strokeWidth="1.500" />
        </Ico>
        <span className="ml-[11px] whitespace-nowrap text-[15px] tracking-[-0.5px] text-[#333]">Type here to search</span>
        <SearchArt />
      </div>
      <Ico w={17} h={16} className="ml-[16px]">
        <path d="M1 0v3.500h10V0M1 16v-3.500h10V16M1 5.500h10v5H1zM14.500 0v3M14.500 7v9" stroke="#fff" strokeWidth="1.200" />
        <path d="M13 4h3v3h-3z" fill="#fff" />
      </Ico>
      <TaskItem open className="ml-[22px] w-[40px]">
        <svg width="25" height="25" viewBox="0 0 24 24">
          <defs>
            <linearGradient id="edgeTop" x1="0" y1="0" x2="1" y2="0.300">
              <stop offset="0" stopColor="#2aa7df" />
              <stop offset="1" stopColor="#6fdb52" />
            </linearGradient>
          </defs>
          <circle cx="12" cy="12" r="12" fill="#1769bd" />
          <path d="M0 12C0 5 5.500 0 12 0s12 4.500 12 10.500c0 4-3 6-6 6-3.500 0-4.500-1.500-4-2.500 1.500-2 .5-6-4-6C5 8 1 9 0 12z" fill="url(#edgeTop)" />
          <path d="M10 10c-4 2-3 9 2 11 4 1.500 8 0 10-3-2 1-4.500 1.500-7 .5-4-1.500-4-5-2.500-6 .5-1-.5-3-2.500-2.500z" fill="#0f4a8c" />
          <path d="M14 14c-.5 1 .5 2.500 4 2.500 2.500 0 5-1 5.700-4L24 17l-3 1.500c-4 0-8-1-7-4.500z" fill="#2b2b2b" />
        </svg>
      </TaskItem>
      <TaskItem open className="ml-[9px] w-[40px]">
        <Ico w={22} h={20}>
          <path d="M0 1h8l2 3h11v14H0z" fill="#e09b2d" />
          <path d="M0 6h22v13H0z" fill="#fccf57" />
          <path d="M4 19v-6a2 2 0 0 1 2-2h10a2 2 0 0 1 2 2v6h-4v-4H8v4z" fill="#3f8fd9" />
        </Ico>
      </TaskItem>
      <TaskItem className="ml-[8px] w-[40px]">
        <Ico w={23} h={24}>
          <path d="M7 7V2h9v5" stroke="#3bb0e8" strokeWidth="2" />
          <path d="M0 6h23v14a3 3 0 0 1-3 3H3a3 3 0 0 1-3-3z" fill="#f1f1f1" />
          <path d="M7 10h4v4H7z" fill="#e8502d" />
          <path d="M12 10h4v4h-4z" fill="#7db81a" />
          <path d="M7 15h4v4H7z" fill="#2ba4e4" />
          <path d="M12 15h4v4h-4z" fill="#f6b81b" />
        </Ico>
      </TaskItem>
      <TaskItem className="ml-[9px] w-[40px]">
        <Ico w={24} h={22}>
          <path d="M0 7L12 0l12 7v14H0z" fill="#1467b5" />
          <path d="M2 6h20v8H2z" fill="#f4f4f4" />
          <path d="M0 7l12 8 12-8v15H0z" fill="#2aa9ee" />
          <path d="M12 15L24 7v15z" fill="#1b8fda" />
        </Ico>
      </TaskItem>
      <TaskItem className="ml-[9px] w-[40px]">
        <Ico w={24} h={22}>
          <path d="M0 0h24v7H0z" fill="#a93a4e" />
          <path d="M0 8h24v6H0z" fill="#3f5fae" />
          <path d="M0 15h24v7H0z" fill="#2f7d45" />
          <path d="M2 0v22M21 0v22" stroke="#d9b24c" strokeWidth="1.500" />
          <path d="M8 0h8v22H8z" fill="#c9793a" />
          <path d="M10.500 6h3v10h-3z" fill="#f3dfa4" />
          <path d="M9.500 12h5v5h-5z" stroke="#fff" />
        </Ico>
      </TaskItem>
      <TaskItem open className="ml-[9px] w-[40px]">
        <Ico w={22} h={22}>
          <path d="M11 3h11v16H11z" fill="#fff" />
          <path d="M13 6h8M13 9h8M13 12h8M13 15h8" stroke="#2b579a" strokeWidth="1.300" />
          <path d="M0 2.500L13 0v22L0 19.500z" fill="#2b579a" />
          <text x="1.500" y="14.500" fontSize="10" fontWeight="700" fill="#fff">W</text>
        </Ico>
      </TaskItem>
      <TaskItem open className="ml-[6px] w-[48px] bg-[#565656]">
        <Ico w={22} h={22}>
          <path d="M11 3h11v16H11z" fill="#fff" />
          <path d="M14 6h7M14 9h7M14 12h7M14 15h7M17.500 4v13" stroke="#217346" strokeWidth="1.300" />
          <path d="M0 2.500L13 0v22L0 19.500z" fill="#217346" />
          <text x="3" y="14.500" fontSize="11" fontWeight="700" fill="#fff">X</text>
        </Ico>
      </TaskItem>
      <Ico w={23} h={17} className="ml-[260px]">
        <circle cx="13" cy="5" r="4" fill="#a9cdf0" />
        <circle cx="18" cy="12.500" r="4" fill="#7ba9da" />
        <path d="M0 7h15M3 11h17M7 14h8" stroke="#9fc3ea" strokeWidth="2" />
      </Ico>
      <span className="ml-[9px] w-[38px] text-[14px] tracking-[-0.5px]">30°C</span>
      <span className="w-[40px] whitespace-nowrap text-[13.5px] [font-family:'DejaVu_Sans']" dir="rtl">عاصف</span>
      <Ico w={12} h={7} className="ml-[24px]">
        <path d="M.5 6.500L6 1l5.500 5.500" stroke="#fff" strokeWidth="1.300" />
      </Ico>
      <Ico w={15} h={9} className="ml-[11px]">
        <path d="M.5.5h12v8H.5z" stroke="#fff" />
        <path d="M2 2h9.500v5H2zM13 3h2v3h-2z" fill="#fff" />
      </Ico>
      <Ico w={13} h={13} className="ml-[11px]">
        <path d="M.5 12A11.500 11.500 0 0 1 12 1M3.500 12A8.500 8.500 0 0 1 12 4.500M6.500 12A5.500 5.500 0 0 1 12 7.500" stroke="#ddd" />
        <circle cx="11" cy="11.500" r="1.500" fill="#fff" />
      </Ico>
      <Ico w={17} h={13} className="ml-[8px]">
        <path d="M.5 4.500h2.500L6.500 1v11L3 8.500H.5zM8.500 4.500q1.500 2 0 4M10.500 3q3 3.500 0 7" stroke="#fff" />
        <path d="M13 1.500q4 5 0 10" stroke="#888" />
      </Ico>
      <span className="ml-[17px] w-[10px] text-[13px] [font-family:'DejaVu_Sans']">ع</span>
      <div className="ml-[14px] flex w-[60px] flex-col items-center whitespace-nowrap text-[12px] leading-[18px] tracking-[-0.5px]">
        <span>3:07 PM</span>
        <span>9/29/2023</span>
      </div>
      <Ico w={16} h={16} className="ml-[14px]">
        <path d="M.5.5h15v12h-5L8 15l-2.500-2.500h-5z" stroke="#fff" strokeWidth="1.200" />
      </Ico>
      <div className="ml-[20px] h-full w-px bg-[#666]" />
    </div>
  );
}

function Watermark() {
  return (
    <div className="pointer-events-none absolute left-[600px] top-[674px] z-20 flex w-[166px] flex-col items-center">
      <div className="h-[54px] whitespace-nowrap text-[46px] font-bold leading-[50px] text-[#8c8c8c] opacity-30 [font-family:'DejaVu_Sans']" dir="rtl">
        مستقل
      </div>
      <div className="text-[27px] font-bold leading-[22px] text-[#bbb] opacity-45 [font-family:'Liberation_Sans']">mostaql.com</div>
    </div>
  );
}

export default function App() {
  return (
    <div className="relative flex h-[768px] w-[1366px] flex-col overflow-hidden [font-family:'Noto_Sans','Open_Sans',sans-serif]">
      <div className="flex h-[64px] flex-col bg-[#217346]">
        <TitleBar />
        <TabStrip />
      </div>
      <Ribbon />
      <FormulaBar />
      <Sheet />
      <SheetTabs />
      <StatusBar />
      <Taskbar />
      <Watermark />
    </div>
  );
}
